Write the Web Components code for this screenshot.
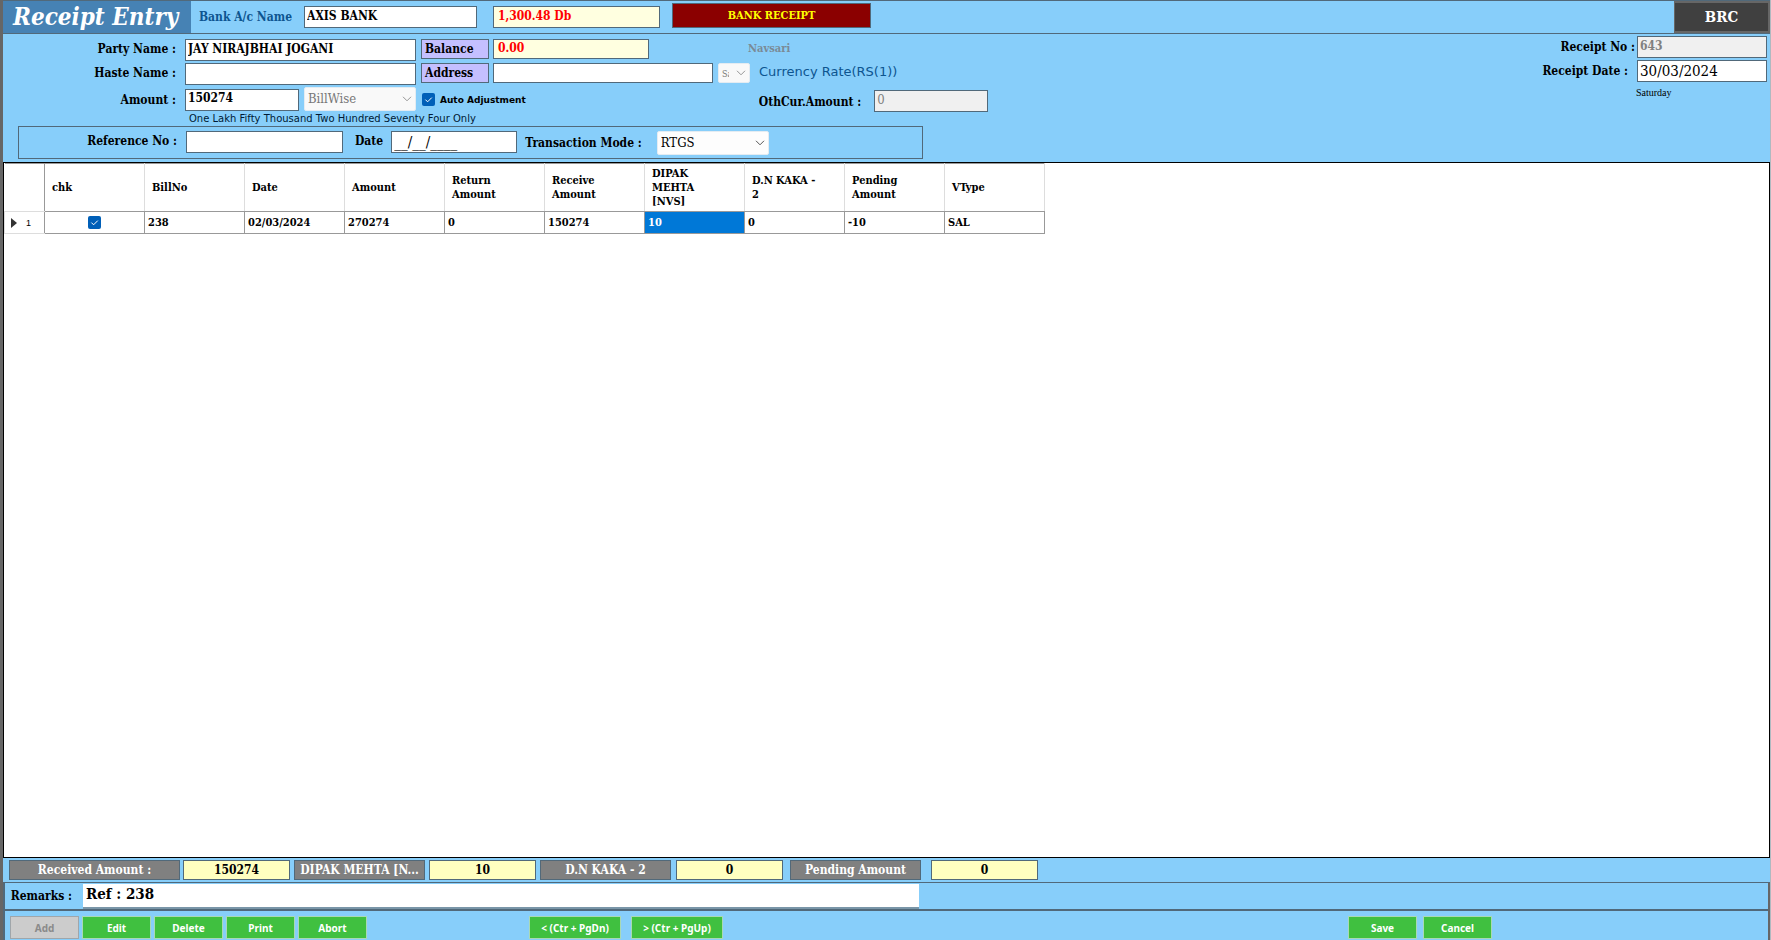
<!DOCTYPE html>
<html lang="en">
<head>
<meta charset="utf-8">
<title>Receipt Entry</title>
<style>
html,body{margin:0;height:100%}
body{font:bold 12px/20px "DejaVu Serif Condensed","DejaVu Serif",serif;color:#000;background:#87cefa}
</style>
</head>
<body>
<receipt-window></receipt-window>

<template id="t-text-field">
<style>
:host{display:flex;flex:none;gap:var(--gap,10px);align-items:var(--align,flex-start)}
label{box-sizing:border-box;width:var(--label-width,auto);text-align:right;white-space:nowrap;line-height:20px;overflow:hidden}
input{box-sizing:border-box;width:var(--w,100px);height:var(--h,22px);margin:0;padding:0 2px 3px;border:1px solid #51697a;border-radius:0;background:#fff;color:#000;font:inherit;outline:0}
:host([tone=cream]) input{background:#ffffe0;color:#f00;padding-left:4px}
:host([tone=disabled]) input{background:#f0f0f0;color:#808080}
:host([size=plain]) input{font-weight:400;font-size:13px}
:host([size=date]) input{font-weight:400;font-size:15px;padding-bottom:1px}
:host([tag]) label{height:20px;line-height:18px;text-align:left;background:#c4bfff;border:1px solid #51697a;padding:0 3px}
:host([total]) label{height:20px;line-height:18px;text-align:center;color:#fff;background:#808080;border:1px solid #51697a}
:host([total]) input{height:20px;padding:0;text-align:center;background:#ffffc0}
:host([nolabel]) label{display:none}
:host([remarks]) input{border:0;border-bottom:2px solid #7a96a8;font-size:15px;padding:0 3px 2px}
</style>
<label for="i"><slot></slot></label><input id="i" type="text">
</template>

<template id="t-select-field">
<style>
:host{display:flex;flex:none;gap:15px;align-items:flex-start;font-weight:400}
label{font-weight:700;line-height:24px;white-space:nowrap}
label:empty{display:none}
.box{position:relative;display:block;width:var(--w,112px);height:var(--h,24px)}
select{appearance:none;box-sizing:border-box;width:100%;height:100%;margin:0;padding:0 20px 0 3px;border:1px solid #e4ecf2;border-radius:2px;background:#fdfdfd;color:#000;font:inherit;font-size:var(--fs,13px);opacity:1}
select:disabled{background:#f9f9f9;color:#777}
svg{position:absolute;right:4px;top:50%;margin-top:-3px;pointer-events:none}
select:disabled + svg{opacity:.6}
</style>
<label for="s"></label>
<span class="box"><select id="s"></select><svg width="10" height="6" viewBox="0 0 10 6" fill="none" stroke="#555"><path d="M1 .8 5 4.8 9 .8"/></svg></span>
</template>

<template id="t-tick-box">
<style>
:host{display:inline-flex;align-items:center;gap:5px;font:bold 9px/14px "DejaVu Sans",sans-serif}
input{appearance:none;margin:0;width:13px;height:13px;border-radius:2px;background:#005fb8 url("data:image/svg+xml,%3Csvg xmlns='http://www.w3.org/2000/svg' viewBox='0 0 13 13'%3E%3Cpath d='M3.4 6.6 5.6 8.8 9.8 4.6' fill='none' stroke='white'/%3E%3C/svg%3E")}
</style>
<input id="c" type="checkbox" checked><label for="c"><slot></slot></label>
</template>

<template id="t-action-button">
<style>
:host{display:block;flex:none}
button{box-sizing:border-box;width:var(--w,69px);height:23px;margin:0;padding:0;border:1px solid #a9d9b4;border-radius:0;background:#40c040;color:#fff;font:bold 10px/20px "Noto Sans",sans-serif;white-space:nowrap}
:host([wide]) button{width:92px}
button:disabled{background:#ccc;border-color:#a0a6aa;color:#8a8a8a}
</style>
<button type="button"><slot></slot></button>
</template>

<template id="t-title-bar">
<style>
:host{display:flex;height:32px;border-top:1px solid #51697a;border-bottom:1px solid #51697a}
h1{box-sizing:border-box;width:188px;margin:0;padding:0 0 0 10px;background:#4682b4;color:#fff;font-size:24px;line-height:32px;font-style:italic;white-space:nowrap}
.fields{display:flex;gap:16px;padding:5px 0 0 8px}
.fields ::slotted(*){color:#0d5590}
.kind{box-sizing:border-box;width:199px;height:25px;margin:2px 0 0 12px;border:1px solid #51697a;background:#8b0000;color:#ff0;font-size:11px;line-height:23px;text-align:center}
.code{box-sizing:border-box;width:96px;margin-left:auto;border:2px solid #666;border-left-width:1px;background:#404040;color:#fff;font-size:15px;line-height:29px;text-align:center}
</style>
<h1>Receipt Entry</h1>
<div class="fields"><slot></slot></div>
<div class="kind">BANK RECEIPT</div>
<div class="code">BRC</div>
</template>

<template id="t-receipt-form">
<style>
:host{display:flex;justify-content:space-between;padding:2px 3px 3px 0}
.main{display:flex;flex-direction:column;gap:2px;padding-top:3px}
.row{display:flex;height:22px}
.row.amount{height:25px}
.main .lead{--label-width:173px;--gap:9px}
.wide{--w:231px}
.tag{--label-width:68px;--gap:4px;--h:20px;margin-left:5px}
.city{margin-left:99px;color:#7a8a96;font-size:11px;line-height:20px}
.rate{margin-left:9px;font:13px/18px "DejaVu Sans",sans-serif;color:#0d5590}
.words{margin:-2px 0 -2px 186px;font:10px/14px "DejaVu Sans",sans-serif;color:#001a33}
.reference{box-sizing:border-box;display:flex;width:905px;height:33px;margin-left:15px;padding:4px 0 0;border:1px solid #51697a}
.side{display:flex;flex-direction:column;align-items:flex-end;gap:2px}
.day{width:131px;font:10px/18px "Liberation Serif",serif}
</style>
<div class="main">
  <div class="row">
    <text-field class="lead wide" value="JAY NIRAJBHAI JOGANI">Party Name :</text-field>
    <text-field class="tag" tag tone="cream" style="--w:156px" value="0.00">Balance</text-field>
    <span class="city">Navsari</span>
  </div>
  <div class="row">
    <text-field class="lead wide">Haste Name :</text-field>
    <text-field class="tag" tag style="--w:220px">Address</text-field>
    <select-field style="--w:32px;--h:20px;--fs:9px;margin-left:5px" value="Sa" name="Address type" disabled></select-field>
    <span class="rate">Currency Rate(RS(1))</span>
  </div>
  <div class="row amount">
    <text-field class="lead" style="--w:114px;--align:center" value="150274">Amount :</text-field>
    <select-field style="margin-left:5px" value="BillWise" name="Adjustment method" disabled></select-field>
    <tick-box style="margin-left:6px">Auto Adjustment</tick-box>
    <text-field style="--w:114px;--gap:13px;--align:flex-end;margin-left:233px" tone="disabled" size="plain" value="0">OthCur.Amount :</text-field>
  </div>
  <div class="words">One Lakh Fifty Thousand Two Hundred Seventy Four Only</div>
  <div class="reference">
    <text-field style="--label-width:158px;--gap:9px;--w:157px">Reference No :</text-field>
    <text-field style="--gap:8px;--w:126px;margin-left:12px" size="date" value="__/__/____">Date</text-field>
    <select-field style="margin-left:8px" value="RTGS" label="Transaction Mode :"></select-field>
  </div>
</div>
<div class="side">
  <text-field style="--gap:2px;--w:130px;--align:center" tone="disabled" value="643">Receipt No :</text-field>
  <text-field style="--gap:9px;--w:130px;--align:center" size="date" value="30/03/2024">Receipt Date :</text-field>
  <span class="day">Saturday</span>
</div>
</template>

<template id="t-bill-grid">
<style>
:host{display:block;flex:1;border:1px solid #000;background:#fff;overflow:hidden}
table{border-collapse:collapse;table-layout:fixed;width:1040px;border-top:1px solid #999}
col{width:100px}
col.head{width:40px}
th,td{box-sizing:border-box;padding:0 20px 0 7px;text-align:left;vertical-align:middle}
thead th{height:48px;font-size:11px;line-height:14px;border-right:1px solid #ddd;border-bottom:1px solid #999}
thead td{border-right:1px solid #999;border-bottom:1px solid #ddd}
tbody td,tbody th{height:22px;padding:0 3px;line-height:14px;font-size:11px;border:1px solid #999}
tbody th{border-color:#ddd #999 #ddd #ddd;font:9px/14px "Liberation Sans",sans-serif;white-space:nowrap}
tbody th svg{margin:0 9px 0 3px;vertical-align:-2px}
td.chk{text-align:center}
td.chk tick-box{vertical-align:middle;gap:0}
td[aria-selected]{background:#0078d7;color:#fff}
</style>
<table>
<colgroup><col class="head"><col span="10"></colgroup>
<thead><tr><td></td><th>chk</th><th>BillNo</th><th>Date</th><th>Amount</th><th>Return Amount</th><th>Receive Amount</th><th>DIPAK MEHTA [NVS]</th><th>D.N KAKA - 2</th><th>Pending Amount</th><th>VType</th></tr></thead>
<tbody><tr><th scope="row"><svg width="6" height="10" viewBox="0 0 6 10" fill="#333"><path d="M0 0 6 5 0 10z"/></svg>1</th><td class="chk"><tick-box></tick-box></td><td>238</td><td>02/03/2024</td><td>270274</td><td>0</td><td>150274</td><td aria-selected="true">10</td><td>0</td><td>-10</td><td>SAL</td></tr></tbody>
</table>
</template>

<template id="t-total-strip">
<style>
:host{display:flex;height:22px;padding:2px 0 0 6px;border-bottom:1px solid #51697a}
text-field{--label-width:131px;--w:107px;--gap:4px;margin-right:4px}
</style>
<text-field total style="--label-width:171px;--gap:3px" value="150274">Received Amount :</text-field>
<text-field total value="10">DIPAK MEHTA [N...</text-field>
<text-field total style="--gap:5px;margin-right:7px" value="0">D.N KAKA - 2</text-field>
<text-field total style="--gap:10px" value="0">Pending Amount</text-field>
</template>

<template id="t-action-bar">
<style>
:host{display:flex;justify-content:space-between;height:24px;padding:5px 276px 0 5px;border-top:2px solid #51697a}
div{display:flex}
.edit{gap:3px}
.step{gap:10px;margin-left:162px}
.done{gap:6px}
</style>
<div class="left">
<div class="edit"><action-button disabled>Add</action-button><action-button>Edit</action-button><action-button>Delete</action-button><action-button>Print</action-button><action-button>Abort</action-button></div>
<div class="step"><action-button wide>&lt; (Ctr + PgDn)</action-button><action-button wide>&gt; (Ctr + PgUp)</action-button></div>
</div>
<div class="done"><action-button>Save</action-button><action-button>Cancel</action-button></div>
</template>

<template id="t-receipt-window">
<style>
:host{box-sizing:border-box;display:flex;flex-direction:column;min-height:100vh;background:#87cefa;border-left:3px solid #666;border-right:1px solid #aeb9c0}
.bank{--w:173px;--gap:12px;--align:center;height:22px}
.foot{border-left:2px solid #51697a;border-right:2px solid #666}
.remarks{display:flex;height:26px;--w:836px;--h:25px;--gap:11px;--label-width:67px;--align:center}
</style>
<title-bar>
<text-field class="bank" value="AXIS BANK">Bank A/c Name</text-field>
<text-field nolabel tone="cream" style="--w:167px" name="Bank balance" value="1,300.48 Db"></text-field>
</title-bar>
<receipt-form></receipt-form>
<bill-grid></bill-grid>
<total-strip></total-strip>
<div class="foot">
<text-field class="remarks" remarks value="Ref : 238">Remarks :</text-field>
<action-bar></action-bar>
</div>
</template>

<script>
class Base extends HTMLElement {
  constructor() {
    super();
    const t = document.getElementById('t-' + this.localName);
    this.attachShadow({mode: 'open'}).append(t.content.cloneNode(true));
  }
  $(q) { return this.shadowRoot.querySelector(q); }
}
class TextField extends Base {
  connectedCallback() {
    const i = this.$('input');
    i.value = this.getAttribute('value') || '';
    i.disabled = this.getAttribute('tone') === 'disabled';
    if (this.hasAttribute('name')) i.setAttribute('aria-label', this.getAttribute('name'));
  }
}
class SelectField extends Base {
  connectedCallback() {
    const s = this.$('select');
    s.replaceChildren(new Option(this.getAttribute('value')));
    s.disabled = this.hasAttribute('disabled');
    this.$('label').textContent = this.getAttribute('label') || '';
    if (this.hasAttribute('name')) s.setAttribute('aria-label', this.getAttribute('name'));
  }
}
class ActionButton extends Base {
  connectedCallback() { this.$('button').disabled = this.hasAttribute('disabled'); }
}
customElements.define('text-field', TextField);
customElements.define('select-field', SelectField);
customElements.define('action-button', ActionButton);
for (const n of ['tick-box', 'title-bar', 'receipt-form', 'bill-grid', 'total-strip', 'action-bar', 'receipt-window'])
  customElements.define(n, class extends Base {});
</script>
</body>
</html>
